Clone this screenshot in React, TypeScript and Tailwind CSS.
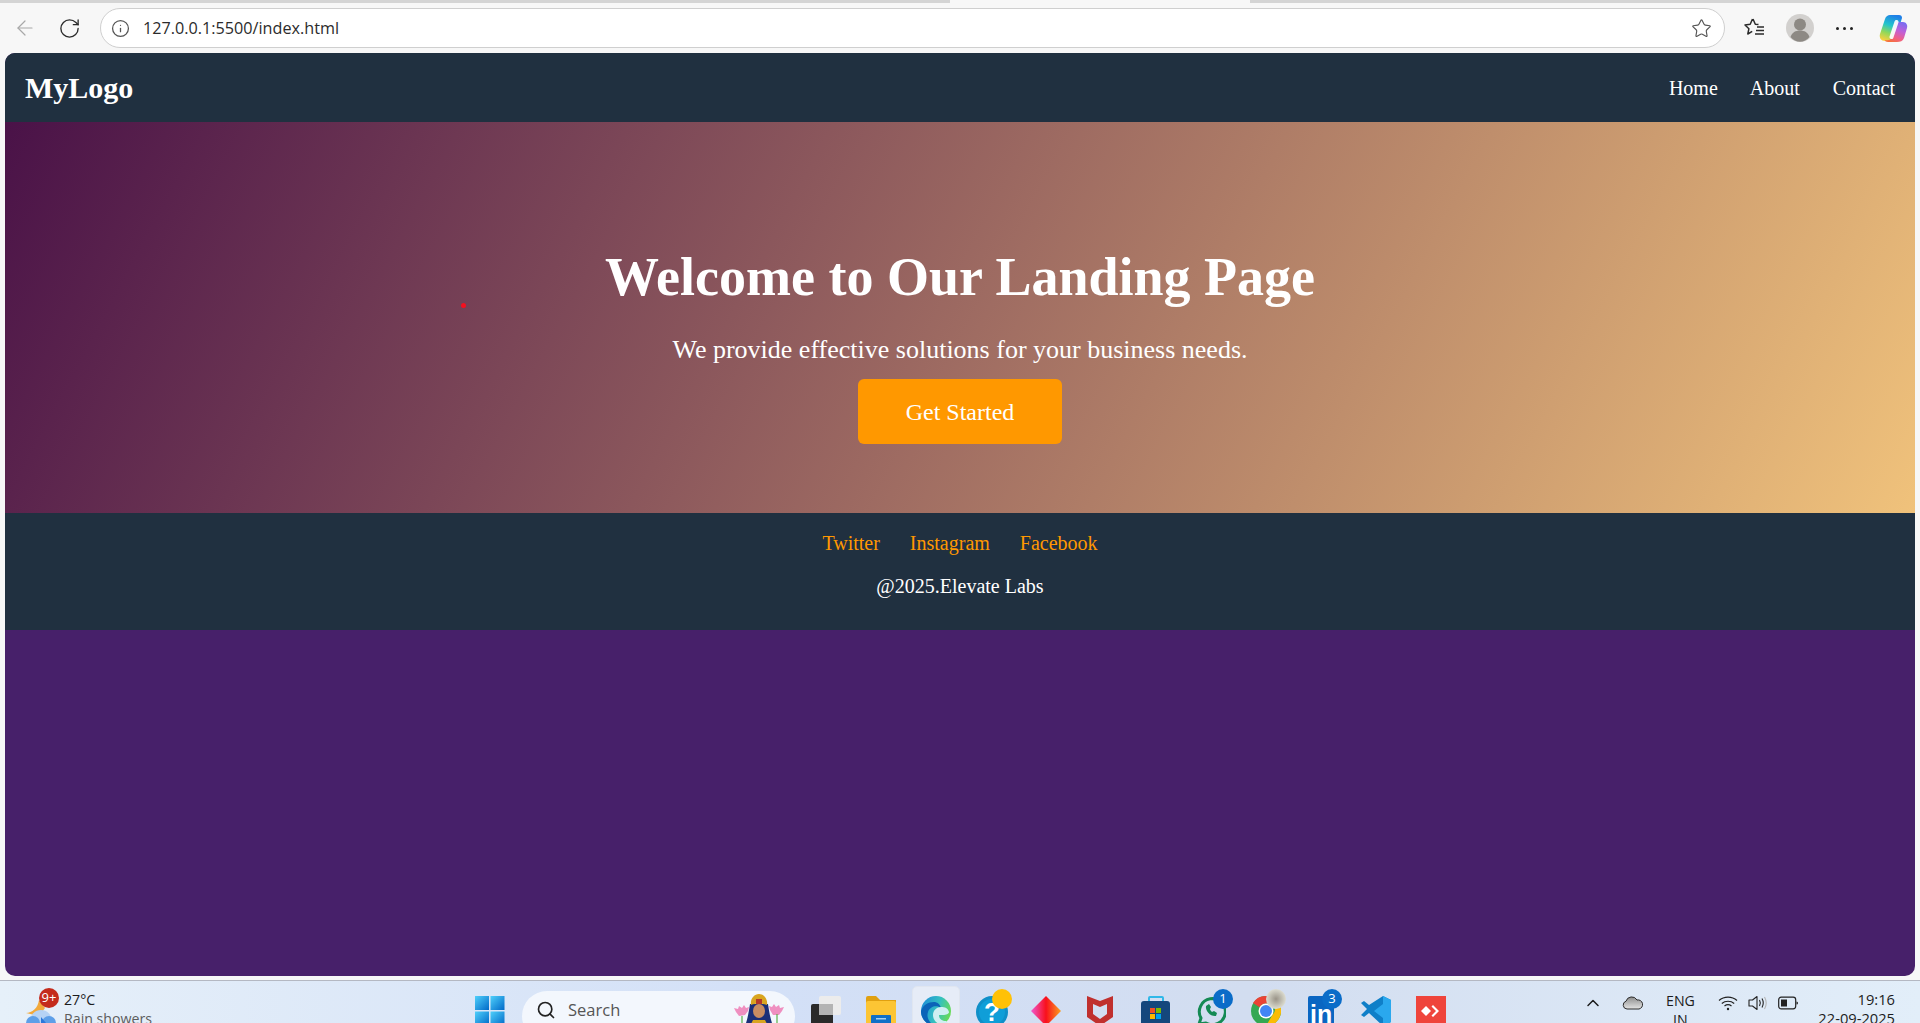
import { ArrowLeft, ChevronUp, Info, RotateCw, Search, Star } from "lucide-react";

const serif = { fontFamily: '"Liberation Serif", serif' };

function FavoritesIcon() {
  return (
    <svg width="24" height="24" viewBox="0 0 24 24" fill="none" stroke="#2b2b2b" strokeWidth="1.5">
      <path d="M10 3l2.300 5.200 3.200.4M9.500 3L7.200 8.300 2 9l3.900 3.700L4.800 18l4.400-2.600" strokeLinejoin="round" />
      <path d="M14 11h7M13 14.500h8M12 18h9" />
    </svg>
  );
}

function Profile() {
  return (
    <svg width="28" height="28" viewBox="0 0 28 28">
      <circle cx="14" cy="14" r="14" fill="#d2d0ce" />
      <circle cx="14" cy="10.500" r="6" fill="#8d8984" />
      <path d="M4.500 23c1.500-4.500 5-6.500 9.500-6.500s8 2 9.500 6.500c-2.500 3-5.800 4.700-9.500 4.700S7 26 4.500 23z" fill="#8d8984" />
    </svg>
  );
}

function CopilotLogo() {
  return (
    <svg width="29" height="29" viewBox="0 0 29 29">
      <defs>
        <linearGradient id="copA" x1="0.6" y1="0" x2="0.3" y2="1">
          <stop offset="0" stopColor="#1f7fe8" />
          <stop offset="0.4" stopColor="#22c4cc" />
          <stop offset="0.7" stopColor="#8fd85a" />
          <stop offset="1" stopColor="#f8d040" />
        </linearGradient>
        <linearGradient id="copB" x1="0.7" y1="0" x2="0.3" y2="1">
          <stop offset="0" stopColor="#7a6cf0" />
          <stop offset="0.4" stopColor="#c060d8" />
          <stop offset="0.75" stopColor="#f0608a" />
          <stop offset="1" stopColor="#f5703c" />
        </linearGradient>
      </defs>
      <path d="M11 1h9c2 0 3 1 3 3l-6 19c-1 3-3 4-6 4H6c-4 0-6-3-5-7L6 5c1-3 3-4 5-4z" fill="url(#copA)" />
      <path d="M16 8h8c3 0 5 3 4 6l-3 10c-1 3-4 4-7 4H9c-2 0-3-1-3-2 4 1 7-1 8-4z" fill="url(#copB)" />
      <path d="M17.500 8l-5 15" stroke="#ffffff" strokeWidth="4" opacity="0.92" strokeLinecap="round" />
    </svg>
  );
}

function BrowserBar() {
  return (
    <div className="h-[53px] shrink-0 bg-[#f7f7f7]">
      <div className="flex h-[3px] bg-[#d4d4d4]">
        <div className="ml-[950px] h-full w-[300px] bg-[#f7f7f7]" />
      </div>
      <div className="flex h-[50px] items-center">
        <ArrowLeft className="ml-[12px] h-[24px] w-[26px] text-[#a8a8a8]" strokeWidth={1.2} />
        <RotateCw className="ml-[20px] h-[23px] w-[23px] text-[#2b2b2b]" strokeWidth={1.4} />
        <div className="ml-[19px] flex h-[40px] w-[1625px] items-center rounded-full border border-[#cfcfcf] bg-white pr-[12px] pl-[10px]">
          <Info className="h-[19px] w-[19px] text-[#555555]" strokeWidth={1.6} />
          <span className="ml-[13px] text-[16.2px] text-[#2b2b2b]" style={{ fontFamily: '"Open Sans", sans-serif' }}>
            127.0.0.1:5500/index.html
          </span>
          <Star className="ml-auto h-[21px] w-[21px] text-[#555555]" strokeWidth={1.3} />
        </div>
        <div className="ml-[18px]">
          <FavoritesIcon />
        </div>
        <div className="ml-[19px]">
          <Profile />
        </div>
        <div className="ml-[22px] flex gap-[4px]">
          <div className="h-[3px] w-[3px] rounded-full bg-[#222222]" />
          <div className="h-[3px] w-[3px] rounded-full bg-[#222222]" />
          <div className="h-[3px] w-[3px] rounded-full bg-[#222222]" />
        </div>
        <div className="ml-[26px]">
          <CopilotLogo />
        </div>
      </div>
    </div>
  );
}

function LandingPage() {
  return (
    <div className="mx-[5px] flex h-[923px] shrink-0 flex-col overflow-hidden rounded-[10px] bg-[#47206a] text-white" style={serif}>
      <nav className="flex h-[69px] shrink-0 items-center justify-between bg-[#203040] px-[20px]">
        <div className="text-[30px] font-bold">MyLogo</div>
        <ul className="flex gap-[32px] text-[20px]">
          <li>Home</li>
          <li>About</li>
          <li className="ml-[1px]">Contact</li>
        </ul>
      </nav>
      <section className="relative flex h-[391px] shrink-0 flex-col items-center bg-[linear-gradient(118deg,#4a1248,#f0c27b)] pt-[124px]">
        <h1 className="text-[54px] leading-[62px] font-bold">Welcome to Our Landing Page</h1>
        <p className="mt-[27px] text-[26px] leading-[30px]">We provide effective solutions for your business needs.</p>
        <button className="mt-[14px] h-[65px] w-[204px] rounded-[6px] bg-[#ff9800] text-[24px]">Get Started</button>
        <div className="absolute top-[181px] left-[456px] h-[5px] w-[5px] rounded-full bg-[#f5101f]" />
      </section>
      <footer className="h-[117px] shrink-0 bg-[#203040] pt-[19px] text-center text-[20px] leading-[23px]">
        <div className="flex justify-center gap-[30px] text-[#ff9800]">
          <span>Twitter</span>
          <span>Instagram</span>
          <span>Facebook</span>
        </div>
        <p className="mt-[20px]">@2025.Elevate Labs</p>
      </footer>
    </div>
  );
}

function WeatherIcon() {
  return (
    <svg width="32" height="35" viewBox="0 0 32 35">
      <path d="M1 20c6 0 12-5 13-13l6 8-6 8z" fill="#f2a93b" />
      <circle cx="16" cy="28" r="11" fill="#b6d3f5" />
      <circle cx="8" cy="30" r="7" fill="#5d9fe8" />
      <circle cx="24" cy="30" r="7" fill="#5d9fe8" />
      <path d="M16 24l5 6-5 5z" fill="#2a78dc" />
    </svg>
  );
}

function WindowsIcon() {
  return (
    <svg width="30" height="30" viewBox="0 0 30 30">
      <defs>
        <linearGradient id="win" x1="0" y1="0" x2="1" y2="1">
          <stop offset="0" stopColor="#4fd0fb" />
          <stop offset="1" stopColor="#0069c8" />
        </linearGradient>
      </defs>
      <rect width="14" height="14" fill="url(#win)" />
      <rect x="15.500" width="14" height="14" fill="url(#win)" />
      <rect y="15.500" width="14" height="14" fill="url(#win)" />
      <rect x="15.500" y="15.500" width="14" height="14" fill="url(#win)" />
    </svg>
  );
}

function GoddessArt() {
  return (
    <svg width="52" height="32" viewBox="0 0 52 32">
      <path d="M3 18l-2-4 4 1 1-3 3 2 2-3 2 3 3-1-1 4-3 4-6 1z" fill="#ef8fc0" />
      <path d="M37 16l-1-4 3 1 2-3 2 3 3-2 1 3 4-1-2 4-3 4-6 0z" fill="#ef8fc0" />
      <path d="M9 22v10M44 20v12" stroke="#5ab04a" strokeWidth="1.200" />
      <path d="M17 10c-1 6-2 14-5 22h28c-3-8-4-16-5-22z" fill="#1b2f78" />
      <path d="M18 11c-1-6 3-11 8-11s9 5 8 11c-5-2-11-2-16 0z" fill="#d9a520" />
      <path d="M23 5h6v5h-6z" fill="#b5382a" />
      <ellipse cx="26" cy="17" rx="6" ry="7" fill="#c98d62" />
      <path d="M20 26h12l3 6H17z" fill="#d9a520" />
    </svg>
  );
}

function TaskViewIcon() {
  return (
    <svg width="30" height="30" viewBox="0 0 30 30">
      <rect x="8" width="22" height="19" rx="2" fill="#ececec" />
      <rect y="8" width="22" height="22" rx="2" fill="#2a2a2a" />
      <rect x="8" y="8" width="14" height="11" fill="#b4b4b4" />
    </svg>
  );
}

function FolderIcon() {
  return (
    <svg width="30" height="30" viewBox="0 0 30 30">
      <path d="M0 2a2 2 0 012-2h8l4 4h16v8H0z" fill="#e0a010" />
      <rect y="5" width="30" height="25" rx="2" fill="#fcc534" />
      <rect x="5" y="19" width="20" height="11" rx="1" fill="#1070c8" />
      <rect x="10" y="22" width="10" height="1.500" fill="#a6d0f0" />
    </svg>
  );
}

function EdgeIcon() {
  return (
    <svg width="30" height="30" viewBox="0 0 30 30">
      <defs>
        <linearGradient id="edgeA" x1="0" y1="0.300" x2="1" y2="0.600">
          <stop offset="0" stopColor="#1f8fd8" />
          <stop offset="0.55" stopColor="#34c0c0" />
          <stop offset="1" stopColor="#6cdc50" />
        </linearGradient>
      </defs>
      <circle cx="15" cy="15" r="15" fill="url(#edgeA)" />
      <path d="M20 12c-4-3-11-2-13 4-2 6 2 12 8 14C7 30 0 24 0 15 2 9 7 6 13 6c3 0 6 2 7 6z" fill="#0b63b8" />
      <path d="M12 19c0-5 4-8 8-8 4 0 7 1 8 5 0 2-3 3-6 3h-4c0 4 3 6 7 6l2 2c-6 4-15 0-15-8z" fill="#cfeef2" />
    </svg>
  );
}

function HelpIcon() {
  return (
    <div className="relative h-[30px] w-[30px]">
      <div className="flex h-[32px] w-[32px] items-center justify-center rounded-full border-[3px] border-[#0f8fc8] bg-[#0f9ed8] text-[26px] leading-none font-bold text-white" style={{ fontFamily: '"Liberation Sans", sans-serif' }}>
        ?
      </div>
      <div className="absolute top-[-7px] left-[16px] h-[20px] w-[20px] rounded-full bg-[#ffc107]" />
    </div>
  );
}

function GemIcon() {
  return (
    <svg width="30" height="30" viewBox="0 0 30 30">
      <defs>
        <linearGradient id="gem" x1="0" y1="0" x2="1" y2="0">
          <stop offset="0" stopColor="#f058d0" />
          <stop offset="0.5" stopColor="#f8101c" />
          <stop offset="1" stopColor="#fca020" />
        </linearGradient>
      </defs>
      <path d="M15 0l15 15-15 15L0 15z" fill="url(#gem)" />
    </svg>
  );
}

function McAfeeIcon() {
  return (
    <svg width="30" height="30" viewBox="0 0 30 30">
      <path fillRule="evenodd" d="M1 0l13 5 13-5v21l-13 9-13-9zM7 8v10l7 5 7-5V8l-7 3z" fill="#c0302e" />
    </svg>
  );
}

function StoreIcon() {
  return (
    <svg width="30" height="30" viewBox="0 0 30 30">
      <path d="M8 6V2a1 1 0 011-1h12a1 1 0 011 1v4" fill="none" stroke="#30b8e8" strokeWidth="2" />
      <rect y="5" width="29" height="25" rx="3" fill="#14477c" />
      <rect x="9" y="12" width="5" height="5" fill="#f25022" />
      <rect x="15" y="12" width="5" height="5" fill="#7fba00" />
      <rect x="9" y="18" width="5" height="5" fill="#ffb900" />
      <rect x="15" y="18" width="5" height="5" fill="#00a4ef" />
    </svg>
  );
}

function WhatsAppIcon() {
  return (
    <div className="relative h-[30px] w-[30px]">
      <svg width="30" height="32" viewBox="0 0 30 32" fill="none">
        <path d="M3 28l2-6a13 13 0 115 5z" stroke="#148a54" strokeWidth="3" strokeLinejoin="round" />
        <path d="M10 10c-1 5 5 11 10 10l1-3-3-2-2 1c-1-1-2-2-2-3l1-2-2-3z" fill="#148a54" />
      </svg>
      <div className="absolute top-[-7px] left-[17px] flex h-[20px] w-[20px] items-center justify-center rounded-full bg-[#0a6cc8] text-[13px] text-white" style={{ fontFamily: '"Open Sans", sans-serif' }}>
        1
      </div>
    </div>
  );
}

function ChromeIcon() {
  return (
    <div className="relative h-[30px] w-[30px]">
      <svg width="30" height="30" viewBox="0 0 30 30">
        <circle cx="15" cy="15" r="15" fill="#34a853" />
        <path d="M15 0a15 15 0 0113 7.500H15a7.500 7.500 0 00-6.500 3.800L2 7a15 15 0 0113-7z" fill="#ea4335" />
        <path d="M28 7.500A15 15 0 0115 30l6.500-11.200a7.500 7.500 0 000-11.300z" fill="#fbbc05" />
        <circle cx="15" cy="15" r="7.500" fill="#fff" />
        <circle cx="15" cy="15" r="6" fill="#4285f4" />
      </svg>
      <div className="absolute top-[-7px] left-[15px] h-[20px] w-[20px] rounded-full bg-[radial-gradient(circle,#9a9488,#dcdcd0_70%)]" />
    </div>
  );
}

function LinkedInIcon() {
  return (
    <div className="relative h-[30px] w-[30px]">
      <div className="ml-[2px] h-[30px] w-[26px] rounded-[2px] bg-[#0a66c2] pt-[6px] pl-[2px] text-[25px] leading-none font-bold text-white" style={{ fontFamily: '"Liberation Sans", sans-serif' }}>
        in
      </div>
      <div className="absolute top-[-7px] left-[16px] flex h-[20px] w-[20px] items-center justify-center rounded-full bg-[#0a6cc8] text-[13px] text-white" style={{ fontFamily: '"Open Sans", sans-serif' }}>
        3
      </div>
    </div>
  );
}

function VsCodeIcon() {
  return (
    <svg width="30" height="30" viewBox="0 0 30 30">
      <path d="M22 0l8 4v22l-8 4-14-13-5 4-3-2 6-6-6-6 3-2 5 4z" fill="#0f7fc8" />
      <path d="M22 0l8 4v22l-8 4V8l-9 7 9 7z" fill="#2aa8ee" />
    </svg>
  );
}

function AnyDeskIcon() {
  return (
    <div className="flex h-[30px] w-[30px] items-center justify-center bg-[#ef443b]">
      <svg width="20" height="12" viewBox="0 0 20 12">
        <path d="M5 1l5 5-5 5-5-5z" fill="#fff" />
        <path d="M12 0l6 6-6 6-1.500-1.500L15 6l-4.500-4.500z" fill="#fff" />
      </svg>
    </div>
  );
}

function OneDriveIcon() {
  return (
    <svg width="21" height="14" viewBox="0 0 21 14">
      <defs>
        <linearGradient id="cloud" x1="0" y1="0" x2="0" y2="1">
          <stop offset="0" stopColor="#8c8c8c" />
          <stop offset="1" stopColor="#e4e4e4" />
        </linearGradient>
      </defs>
      <path d="M5 13a4 4 0 01-1-7.800A6 6 0 0115 4a4.500 4.500 0 012 9z" fill="url(#cloud)" stroke="#2a2a2a" strokeWidth="1" />
    </svg>
  );
}

function WifiIcon() {
  return (
    <svg width="20" height="16" viewBox="0 0 20 16" fill="none" stroke="#222222" strokeWidth="1.200">
      <path d="M1 5.500c5-4.500 13-4.500 18 0M3.800 8.500c3.500-3 9-3 12.400 0M6.500 11c2-1.500 5-1.500 7 0" />
      <circle cx="10" cy="14" r="1.200" fill="#222222" stroke="none" />
    </svg>
  );
}

function VolumeIcon() {
  return (
    <svg width="20" height="16" viewBox="0 0 20 16" fill="none" stroke="#222222" strokeWidth="1.100">
      <path d="M1 5h3.500L9 1.500v13L4.500 11H1z" strokeLinejoin="round" />
      <path d="M11.500 5c1 1.800 1 4.200 0 6M14 3.500c1.500 2.700 1.500 6.300 0 9" />
      <path d="M16.500 2c2 3.500 2 8.500 0 12" stroke="#b5b5b5" />
    </svg>
  );
}

function BatteryIcon() {
  return (
    <svg width="20" height="14" viewBox="0 0 20 14" fill="none">
      <rect x="0.700" y="1.200" width="17" height="11.600" rx="2.500" stroke="#222222" strokeWidth="1.200" />
      <rect x="3" y="3.500" width="6" height="7" fill="#222222" />
      <path d="M18.500 5.500a1.500 1.500 0 010 3z" fill="#222222" />
    </svg>
  );
}

function Taskbar() {
  return (
    <div className="relative mt-[4px] h-[43px] shrink-0 overflow-hidden border-t border-[#b4b8c2] bg-[linear-gradient(90deg,#e6f0f9,#d3e0f7_40%,#d2ddf0_65%,#e2eef9)] text-[14.2px] text-[#1c1c1c]" style={{ fontFamily: '"Open Sans", sans-serif' }}>
      <div className="absolute top-[7px] left-[25px]">
        <div className="mt-[5px]">
          <WeatherIcon />
        </div>
        <div className="absolute top-0 left-[14px] flex h-[20px] w-[20px] items-center justify-center rounded-full bg-[#c42b1c] text-[13px] text-white">9+</div>
      </div>
      <div className="absolute top-[9px] left-[64px] leading-[19px]">
        <div>27°C</div>
        <div className="text-[#5c5c5c]">Rain showers</div>
      </div>

      <div className="absolute top-[15px] left-[475px]">
        <WindowsIcon />
      </div>
      <div className="absolute top-[10px] left-[522px] flex h-[50px] w-[273px] items-start rounded-full bg-[#f3f7fd] pt-[9px] pl-[14px]">
        <Search className="h-[20px] w-[20px] text-[#222222]" strokeWidth={2} />
        <span className="ml-[12px] text-[16.5px] leading-[20px] text-[#555555]">Search</span>
        <div className="absolute top-[3px] left-[211px]">
          <GoddessArt />
        </div>
      </div>
      <div className="absolute top-[5px] left-[912px] h-[50px] w-[48px] rounded-[5px] border border-[#e0e6f0] bg-[#e6ecf7]" />

      <div className="absolute top-[15px] left-[811px] flex gap-[25px]">
        <TaskViewIcon />
        <FolderIcon />
        <EdgeIcon />
        <HelpIcon />
        <GemIcon />
        <McAfeeIcon />
        <StoreIcon />
        <WhatsAppIcon />
        <ChromeIcon />
        <LinkedInIcon />
        <VsCodeIcon />
        <AnyDeskIcon />
      </div>

      <ChevronUp className="absolute top-[12px] left-[1583px] h-[20px] w-[20px]" strokeWidth={1.8} />
      <div className="absolute top-[15px] left-[1622px]">
        <OneDriveIcon />
      </div>
      <div className="absolute top-[10px] left-[1666px] text-center leading-[19px]">
        <div>ENG</div>
        <div>IN</div>
      </div>
      <div className="absolute top-[14px] left-[1718px] flex items-center gap-[10px]">
        <WifiIcon />
        <VolumeIcon />
        <BatteryIcon />
      </div>
      <div className="absolute top-[9px] right-[25px] text-right text-[14.7px] leading-[19px]">
        <div>19:16</div>
        <div>22-09-2025</div>
      </div>
    </div>
  );
}

export default function App() {
  return (
    <div className="flex h-[1023px] flex-col overflow-hidden bg-[#f7f7f7]">
      <BrowserBar />
      <LandingPage />
      <Taskbar />
    </div>
  );
}
